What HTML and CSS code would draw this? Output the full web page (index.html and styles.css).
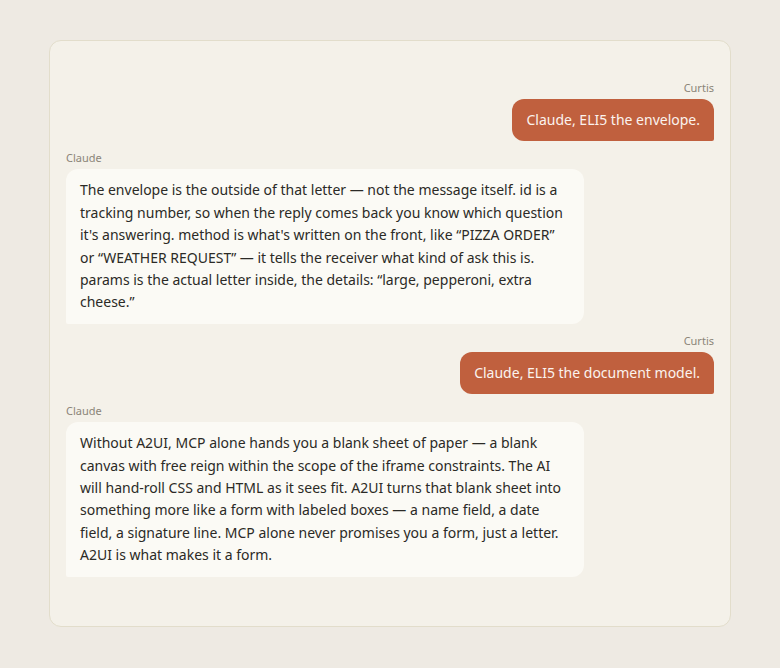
FILE: index.html
```html
<html>
  <head>
    <link rel="stylesheet" href="styles.css">
  </head>
  <body>
    <div class="chat">
      <!-- user -->
      <div class="msg msg-user">
        <div class="who">Curtis</div>
        <div class="bubble">Claude, ELI5 the envelope.</div>
      </div>
      <!-- assistant -->
      <div class="msg msg-bot">
        <div class="who">Claude</div>
        <div class="bubble">The envelope is the outside of that letter — not the message itself. id is a tracking number, so when the reply comes back you know which question it's answering. method is what's written on the front, like “PIZZA ORDER” or “WEATHER REQUEST” — it tells the receiver what kind of ask this is. params is the actual letter inside, the details: “large, pepperoni, extra cheese.”</div>
      </div>
      <div class="msg msg-user">
        <div class="who">Curtis</div>
        <div class="bubble">Claude, ELI5 the document model.</div>
      </div>
      <div class="msg msg-bot">
        <div class="who">Claude</div>
        <div class="bubble">Without A2UI, MCP alone hands you a blank sheet of paper — a blank canvas with free reign within the scope of the iframe constraints. The AI will hand-roll CSS and HTML as it sees fit. A2UI turns that blank sheet into something more like a form with labeled boxes — a name field, a date field, a signature line. MCP alone never promises you a form, just a letter. A2UI is what makes it a form.</div>
      </div>
    </div>
  </body>
</html>
```

FILE: styles.css
```css
* {
  margin: 0;
  padding: 0;
  box-sizing: border-box;
}
body {
  background-color: #eeeae3;
  padding: 40px 49px;
  font-family: "Noto Sans", sans-serif;
  color: #2b2a26;
}
.chat {
  background-color: #f4f1e9;
  border: 1px solid #e2ddcb;
  border-radius: 12px;
  padding: 40px 16px 49px;
  display: flex;
  flex-direction: column;
  gap: 10px;
}
.msg {
  display: flex;
  flex-direction: column;
}
.msg-user {
  align-items: flex-end;
}
.msg-bot {
  align-items: flex-start;
}
.who {
  font-size: 11px;
  line-height: 14px;
  color: #8b8578;
  margin-bottom: 4px;
}
.bubble {
  font-size: 14px;
  line-height: 22.4px;
  padding: 10px 14px;
}
.msg-user .bubble {
  background-color: #c0603e;
  color: #fbf3ee;
  border-radius: 12px 12px 2px 12px;
}
.msg-bot .bubble {
  background-color: #fbfaf5;
  max-width: 80%;
  border-radius: 12px 12px 12px 2px;
}
```
